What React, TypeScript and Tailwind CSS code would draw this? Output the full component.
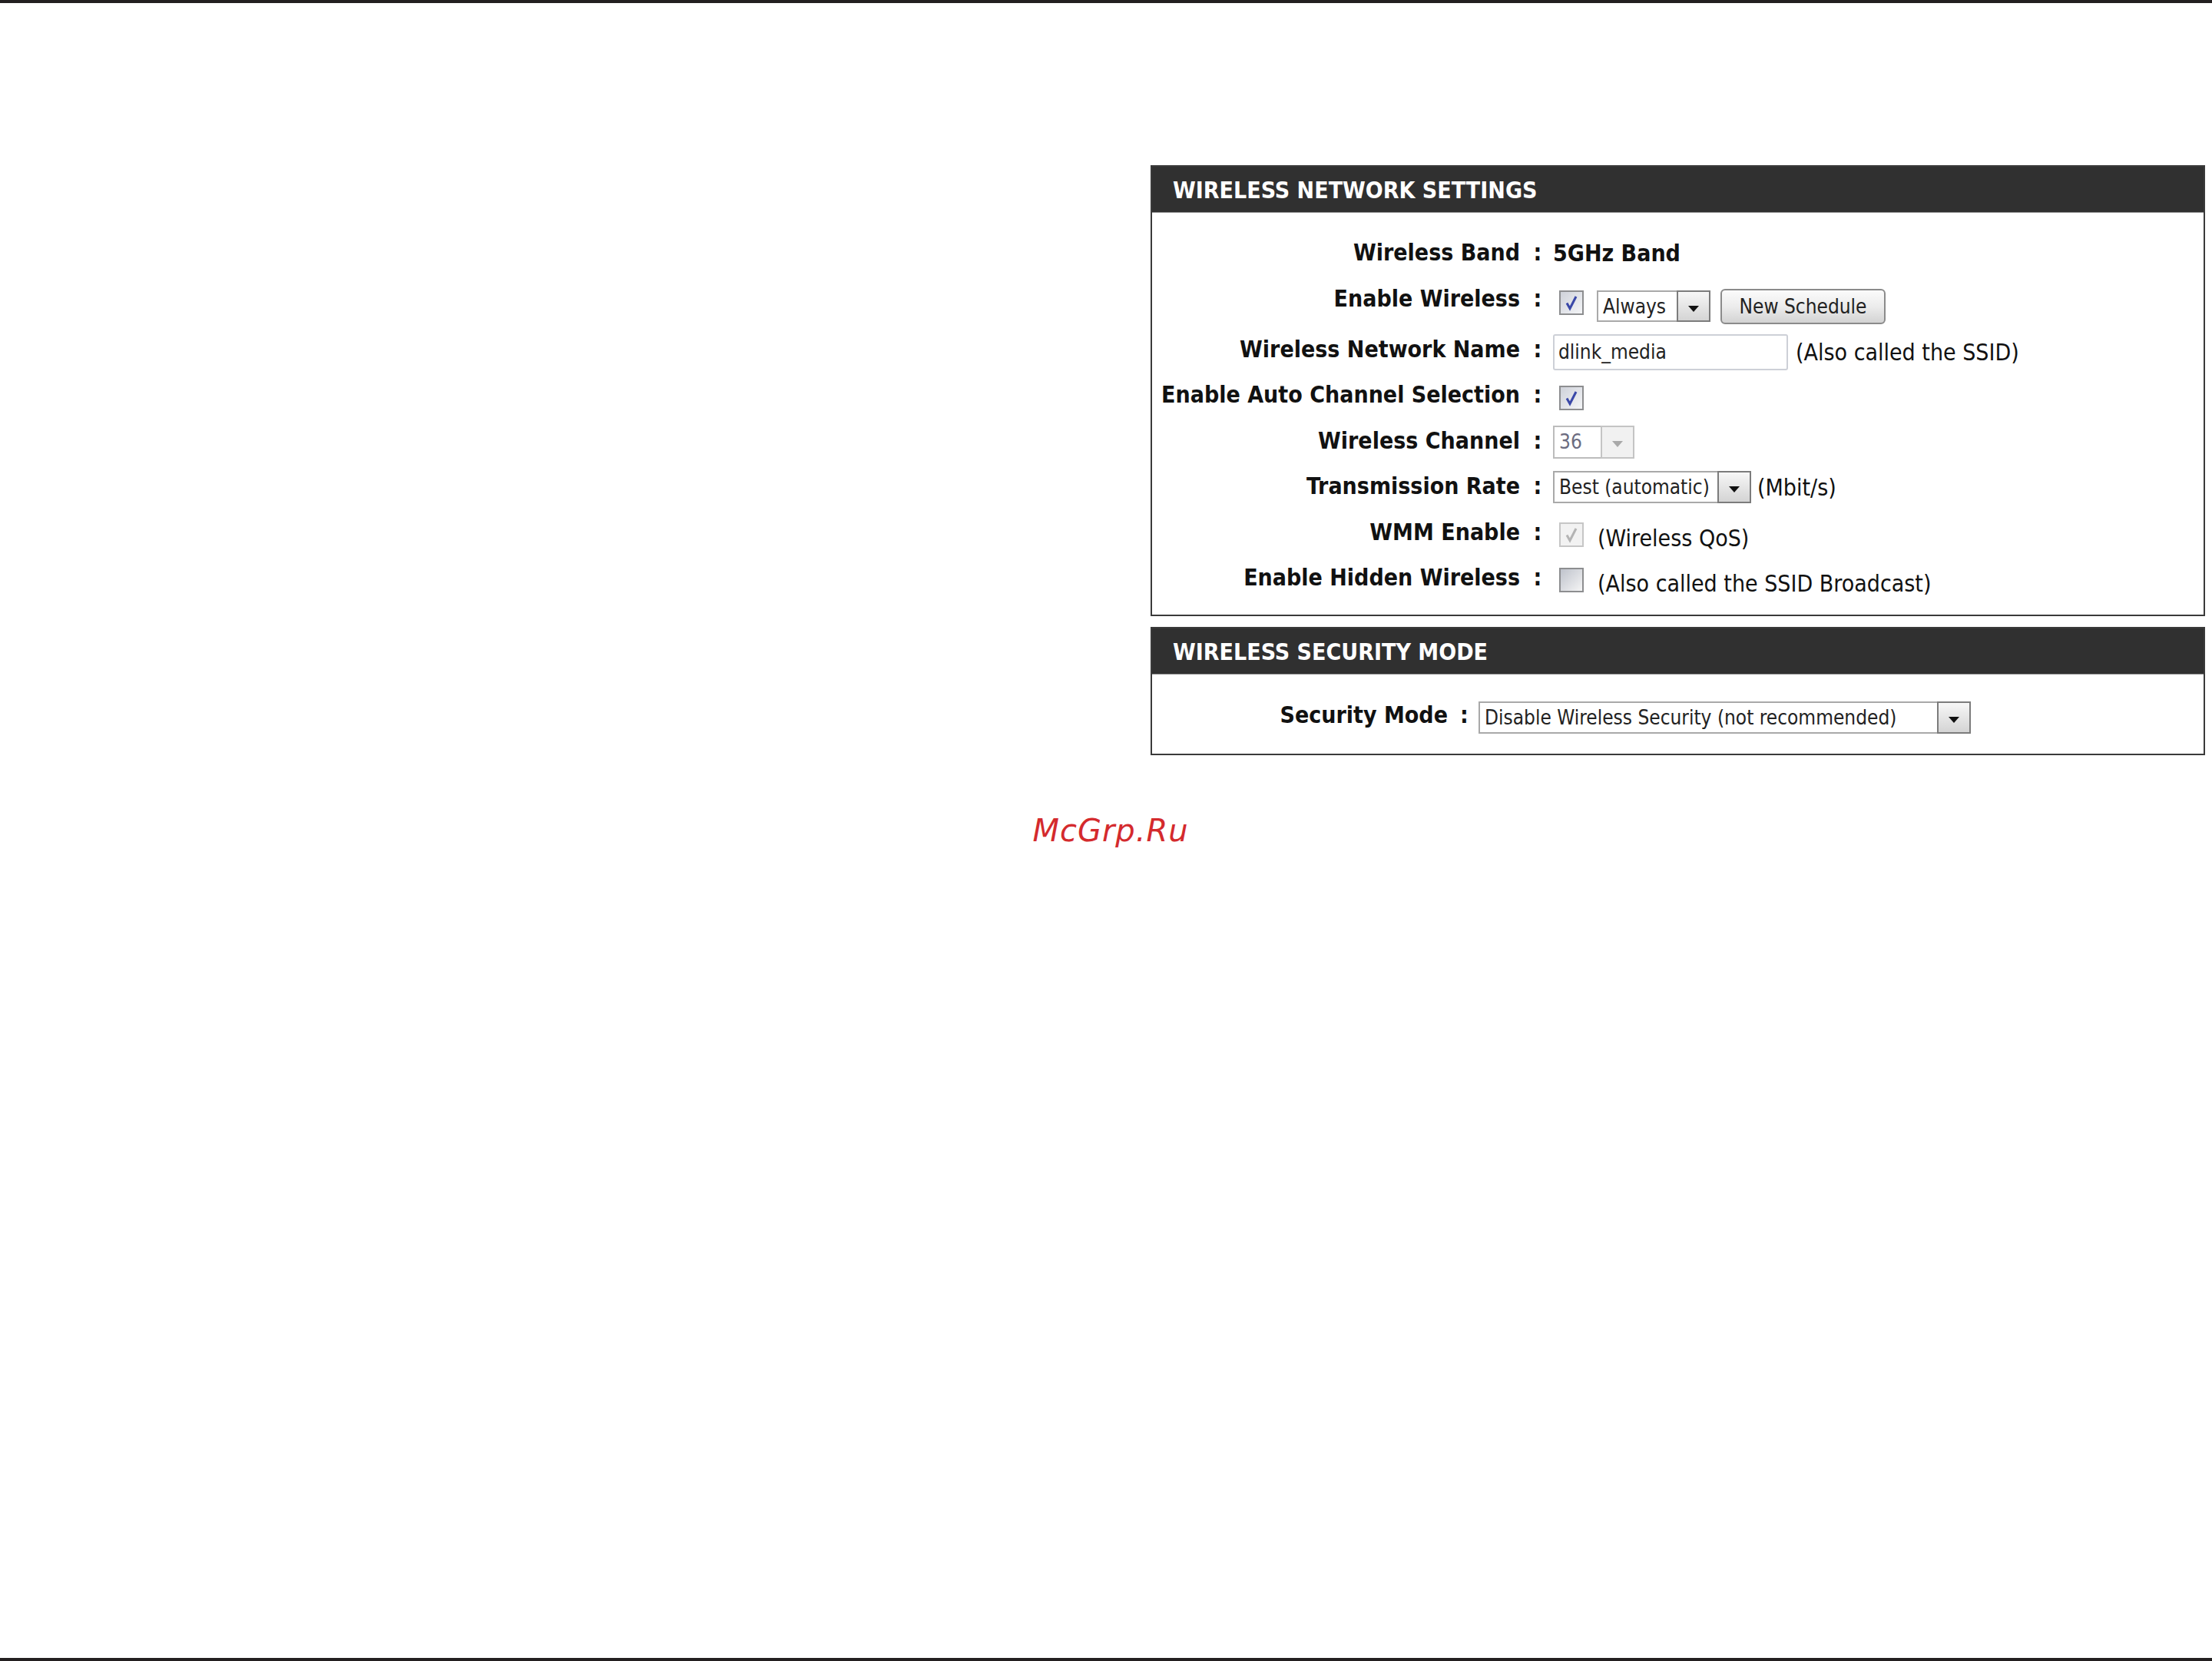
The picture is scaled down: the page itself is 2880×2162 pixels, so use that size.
import React from "react";

type BoxState = "checked" | "unchecked" | "disabled";

function CheckBox({ state, className = "" }: { state: BoxState; className?: string }) {
  const frame =
    state === "disabled"
      ? "border-[#c6c6c6] bg-[#f2f2f2]"
      : state === "checked"
      ? "border-[#8d8e90] bg-gradient-to-br from-[#cfd2da] to-[#f4f5f7]"
      : "border-[#8d8e90] bg-gradient-to-br from-[#bfc3cc] to-[#f5f5f5]";
  return (
    <div className={`w-[32px] h-[32px] shrink-0 border-2 ${frame} ${className}`}>
      {state !== "unchecked" && (
        <svg viewBox="0 0 28 28" className="w-full h-full">
          <path
            d="M8 14.5 L12 21.5 L20 6"
            fill="none"
            stroke={state === "disabled" ? "#b4b4b4" : "#3a48a8"}
            strokeWidth="3"
            strokeLinejoin="miter"
          />
        </svg>
      )}
    </div>
  );
}

function Select({
  value,
  className = "",
  disabled = false,
}: {
  value: string;
  className?: string;
  disabled?: boolean;
}) {
  return (
    <div className={`flex shrink-0 text-[26px] leading-none ${className}`}>
      <div
        className={`flex-1 flex items-center pl-[6px] border-2 border-r-0 bg-white whitespace-nowrap ${
          disabled ? "border-[#bcbcbc] text-[#6c6c80]" : "border-[#a9a9a9] text-[#222]"
        }`}
      >
        {value}
      </div>
      <div
        className={`w-[44px] flex items-center justify-center pt-[6px] border-2 ${
          disabled
            ? "border-[#c4c4c4] bg-[#f1f1f1]"
            : "border-[#7c7c7c] bg-gradient-to-b from-[#f7f7f7] to-[#d4d4d4]"
        }`}
      >
        <svg width="14" height="8" viewBox="0 0 14 8">
          <path d="M0 0 H14 L7 8 Z" fill={disabled ? "#a9a9a9" : "#111"} />
        </svg>
      </div>
    </div>
  );
}

function Label({ text, width }: { text: string; width: string }) {
  return (
    <div className={`${width} shrink-0 text-right font-bold text-[30px] leading-[1.2] whitespace-nowrap`}>
      {text}
    </div>
  );
}

function Colon({ width }: { width: string }) {
  return (
    <div className={`${width} shrink-0 text-center font-bold text-[30px] leading-[1.2] pl-[3px]`}>:</div>
  );
}

function PanelHeader({ title }: { title: string }) {
  return (
    <div className="h-[60px] bg-[#303030] border-b border-[#8f8f8f] flex items-center pl-[27px] pt-[3px]">
      <h2 className="text-white font-bold text-[30px] leading-[1.2]">{title}</h2>
    </div>
  );
}

export default function App() {
  const labelW = "w-[479px]";
  const colonW = "w-[43px]";
  return (
    <div className="w-[2880px] h-[2162px] bg-white flex flex-col text-[#111] font-['DejaVu_Sans_Condensed','DejaVu_Sans',sans-serif]">
      <div className="h-[4px] bg-[#231f20]" />

      <div className="flex-1 flex flex-col">
        <div className="mt-[211px] ml-auto mr-[9px] w-[1373px] flex flex-col gap-[14px]">
          {/* Wireless network settings */}
          <section className="border-2 border-[#3a3a3a]">
            <PanelHeader title="WIRELESS NETWORK SETTINGS" />
            <div className="pt-[22px] pb-[18px] flex flex-col">
              <div className="h-[60px] flex items-center">
                <Label text="Wireless Band" width={labelW} />
                <Colon width={colonW} />
                <div className="font-bold text-[30px] leading-[1.2] mt-[2px]">5GHz Band</div>
              </div>

              <div className="h-[60px] flex items-center">
                <Label text="Enable Wireless" width={labelW} />
                <Colon width={colonW} />
                <div className="flex items-start mt-[20px]">
                  <CheckBox state="checked" className="ml-[8px] mt-[2px]" />
                  <Select value="Always" className="ml-[17px] mt-[2px] w-[148px] h-[41px]" />
                  <button className="ml-[13px] w-[215px] h-[46px] rounded-[6px] border-2 border-[#8b8b8b] bg-gradient-to-b from-[#fbfbfb] via-[#ececec] to-[#d3d3d3] text-[26px] leading-none text-[#222]">
                    New Schedule
                  </button>
                </div>
              </div>

              <div className="h-[59.4px] mt-[6.3px] flex items-center">
                <Label text="Wireless Network Name" width={labelW} />
                <Colon width={colonW} />
                <div className="flex items-center mt-[7px]">
                  <div className="w-[306px] h-[47px] border-2 border-[#cdd0d7] rounded-[3px] bg-white flex items-center pl-[5px] text-[26px] leading-none text-[#222]">
                    dlink_media
                  </div>
                  <span className="ml-[10px] text-[30px] leading-[1.2] mt-[2px]">(Also called the SSID)</span>
                </div>
              </div>

              <div className="h-[59.4px] flex items-center">
                <Label text="Enable Auto Channel Selection" width={labelW} />
                <Colon width={colonW} />
                <CheckBox state="checked" className="ml-[8px] mt-[7px]" />
              </div>

              <div className="h-[59.4px] flex items-center">
                <Label text="Wireless Channel" width={labelW} />
                <Colon width={colonW} />
                <Select value="36" disabled className="w-[106px] h-[43px] mt-[3px]" />
              </div>

              <div className="h-[59.4px] flex items-center">
                <Label text="Transmission Rate" width={labelW} />
                <Colon width={colonW} />
                <div className="flex items-center mt-[2px]">
                  <Select value="Best (automatic)" className="w-[258px] h-[42px]" />
                  <span className="ml-[8px] text-[30px] leading-[1.2] mt-[2px]">(Mbit/s)</span>
                </div>
              </div>

              <div className="h-[59.4px] flex items-center">
                <Label text="WMM Enable" width={labelW} />
                <Colon width={colonW} />
                <div className="flex items-center mt-[7px]">
                  <CheckBox state="disabled" className="ml-[8px]" />
                  <span className="ml-[18px] text-[30px] leading-[1.2] mt-[10px]">(Wireless QoS)</span>
                </div>
              </div>

              <div className="h-[59.4px] flex items-center">
                <Label text="Enable Hidden Wireless" width={labelW} />
                <Colon width={colonW} />
                <div className="flex items-center mt-[7px]">
                  <CheckBox state="unchecked" className="ml-[8px]" />
                  <span className="ml-[18px] text-[30px] leading-[1.2] mt-[10px]">(Also called the SSID Broadcast)</span>
                </div>
              </div>
            </div>
          </section>

          {/* Wireless security mode */}
          <section className="border-2 border-[#3a3a3a]">
            <PanelHeader title="WIRELESS SECURITY MODE" />
            <div className="pt-[23px] pb-[20px]">
              <div className="h-[60px] flex items-center">
                <Label text="Security Mode" width="w-[385px]" />
                <Colon width="w-[40px]" />
                <Select
                  value="Disable Wireless Security (not recommended)"
                  className="w-[641px] h-[42px] mt-[6px]"
                />
              </div>
            </div>
          </section>
        </div>

        <p className="mt-[74px] pl-[12px] text-center italic text-[40px] leading-[1.2] tracking-[1px] text-[#d42a2d] font-['DejaVu_Sans',sans-serif]">
          McGrp.Ru
        </p>
      </div>

      <div className="h-[4px] bg-[#231f20]" />
    </div>
  );
}
